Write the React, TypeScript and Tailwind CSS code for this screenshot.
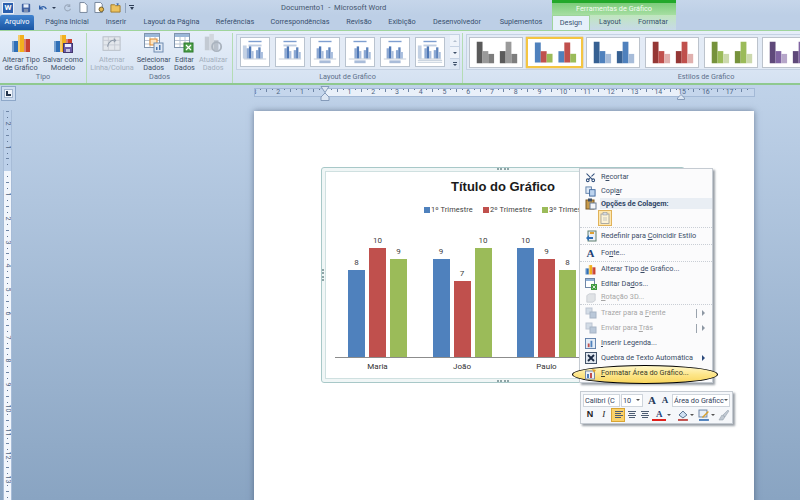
import React from "react";
import { Scissors } from "lucide-react";

const tabs = [
  ["Página Inicial", "w-[60px]"],
  ["Inserir", "w-[38px]"],
  ["Layout da Página", "w-[73px]"],
  ["Referências", "w-[54px]"],
  ["Correspondências", "w-[76px]"],
  ["Revisão", "w-[42px]"],
  ["Exibição", "w-[44px]"],
  ["Desenvolvedor", "w-[66px]"],
  ["Suplementos", "w-[62px]"],
];

function BarsIcon({ className = "w-[20px] h-[20px]", dim = false }: { className?: string; dim?: boolean }) {
  return (
    <svg viewBox="0 0 20 20" className={className}>
      <rect x="1" y="8" width="6" height="11" fill={dim ? "#b9c2cc" : "#2f6fb7"} />
      <rect x="7" y="2" width="6" height="17" fill={dim ? "#c6cdd5" : "#f2b01e"} />
      <rect x="13" y="6" width="6" height="13" fill={dim ? "#aeb7c2" : "#c8402f"} />
      <rect x="1" y="8" width="2" height="11" fill="#ffffff" opacity="0.35" />
      <rect x="7" y="2" width="2" height="17" fill="#ffffff" opacity="0.35" />
      <rect x="13" y="6" width="2" height="13" fill="#ffffff" opacity="0.35" />
    </svg>
  );
}

function SheetIcon({ kind }: { kind: "swap" | "select" | "edit" | "refresh" }) {
  if (kind === "refresh") {
    return (
      <svg viewBox="0 0 22 22" className="w-[20px] h-[20px]">
        <rect x="2" y="4" width="5" height="15" fill="#c3cad3" />
        <rect x="7" y="1" width="5" height="18" fill="#d2d7de" />
        <rect x="12" y="8" width="5" height="11" fill="#b8c0ca" />
        <circle cx="15" cy="15" r="5" fill="none" stroke="#aab3be" strokeWidth="2" />
      </svg>
    );
  }
  if (kind === "swap") {
    return (
      <svg viewBox="0 0 22 20" className="w-[20px] h-[18px]">
        <rect x="1" y="2" width="19" height="15" fill="#e3e7ec" stroke="#b4bbc4" />
        <path d="M1 6h19M1 11h19M7 2v15M14 2v15" stroke="#c5cbd3" />
        <path d="M6 13c1-6 5-8 9-7M13 4l2 2-2 2" fill="none" stroke="#8e9aa8" strokeWidth="1.2" />
      </svg>
    );
  }
  return (
    <svg viewBox="0 0 20 20" className="w-[20px] h-[20px]">
      <rect x="0.5" y="0.5" width="15" height="14" fill="#ffffff" stroke="#8094ad" />
      <rect x="1" y="1" width="14" height="3" fill="#9bb7d9" />
      <path d="M1 7.5h14M1 11h14M6 4v10M11 4v10" stroke="#b8c4d2" />
      {kind === "select" && <rect x="6" y="6" width="7" height="6" fill="#fbe3c0" stroke="#e08a2e" />}
      {kind === "select" ? (
        <>
          <rect x="10" y="10" width="9" height="9" fill="#dfe8f3" stroke="#6f8bb0" />
          <rect x="12" y="14" width="1.5" height="3" fill="#4a76b0" />
          <rect x="15" y="12" width="1.5" height="5" fill="#4a76b0" />
        </>
      ) : (
        <>
          <rect x="10" y="10" width="9" height="9" fill="#4fa04a" stroke="#2c7a2c" />
          <path d="M12 12l5 5M17 12l-5 5" stroke="#ffffff" strokeWidth="1.2" />
        </>
      )}
    </svg>
  );
}

function BigButton({ icon, l1, l2, width, dim = false }: { icon: React.ReactNode; l1: string; l2: string; width: string; dim?: boolean }) {
  return (
    <div className={`flex flex-col items-center ${width}`}>
      <div className="h-[20px] flex items-end justify-center">{icon}</div>
      <div className={`mt-[3px] text-center text-[7.3px] leading-[8px] whitespace-nowrap ${dim ? "text-[#a3afbd]" : "text-[#3f5068]"}`}>
        <div>{l1}</div>
        <div>{l2}</div>
      </div>
    </div>
  );
}

function Group({ width, label, children, last = false }: { width: string; label: string; children: React.ReactNode; last?: boolean }) {
  return (
    <div className={`${width} shrink-0 flex flex-col ${last ? "" : "border-r border-[#b4dcb4]"}`}>
      <div className="h-[40px] flex">{children}</div>
      <div className="h-[11px] text-center text-[7.3px] leading-[10px] text-[#5d708a]">{label}</div>
    </div>
  );
}

function LayoutThumb({ n }: { n: number }) {
  const offset = n % 2 === 0 ? 0 : 3;
  return (
    <div className="w-[30px] h-[30px] shrink-0 bg-white border border-[#b9c3cf]">
      <svg viewBox="0 0 30 30" className="w-full h-full">
        <rect x="8" y="3" width="14" height="1.5" fill="#7f9fd0" />
        {n === 0 || n === 5 ? <rect x="2" y="8" width="4" height="14" fill="#c3d1e4" /> : null}
        {n >= 2 && n < 5 ? <rect x="9" y="24" width="12" height="3" fill="#a9bcd9" /> : <rect x="8" y="7" width="14" height="2" fill="#c0cee2" />}
        <rect x={6 + offset} y="11" width="2.5" height="11" fill="#8da9d3" />
        <rect x={8.5 + offset} y="9" width="2.5" height="13" fill="#4f78b6" />
        <rect x={11 + offset} y="14" width="2.5" height="8" fill="#aabfde" />
        <rect x={16 + offset} y="13" width="2.5" height="9" fill="#8da9d3" />
        <rect x={18.5 + offset} y="10" width="2.5" height="12" fill="#5f85bd" />
        <rect x={21 + offset} y="15" width="2.5" height="7" fill="#aabfde" />
        <path d="M3 22.5h24" stroke="#9aa8ba" strokeWidth="0.6" />
        {n === 5 ? <path d="M2 24h26M2 26h26" stroke="#b0bed0" strokeWidth="0.8" /> : null}
      </svg>
    </div>
  );
}

function StyleThumb({ colors, selected = false, width = "w-[54px]", extra = "" }: { colors: [string, string, string]; selected?: boolean; width?: string; extra?: string }) {
  const [a, b, c] = colors;
  return (
    <div className={`${width} ${extra} h-[31px] shrink-0 bg-white ${selected ? "border-2 border-[#f4c542] shadow-[0_0_1px_#c98a10]" : "border border-[#bcc3cc]"}`}>
      <svg viewBox="0 0 54 31" preserveAspectRatio="none" className="w-full h-full">
        <rect x="7" y="4" width="6" height="23" fill={a} />
        <rect x="13" y="14" width="6" height="13" fill={b} />
        <rect x="19" y="17" width="6" height="10" fill={c} />
        <rect x="31" y="14" width="6" height="13" fill={a} />
        <rect x="37" y="4" width="6" height="23" fill={b} />
        <rect x="43" y="17" width="6" height="10" fill={c} />
      </svg>
    </div>
  );
}

function Ruler({ vertical = false }: { vertical?: boolean }) {
  const cells = vertical ? Array.from({ length: 66 }, (_, i) => i - 10) : Array.from({ length: 84 }, (_, i) => i - 12);
  return (
    <div className={vertical ? "flex flex-col -mt-[1.5px]" : "flex -ml-[3.4px]"}>
      {cells.map((i) => {
        const size = vertical ? "h-[5.95px] w-full" : "w-[5.95px] h-full";
        const mod = ((i % 4) + 4) % 4;
        return (
          <div key={i} className={`${size} shrink-0 flex items-center justify-center text-[7px] leading-none text-[#4f6585]`}>
            {mod === 0 && i !== 0 ? (
              <span className={vertical ? "rotate-90" : ""}>{Math.abs(i / 4)}</span>
            ) : mod === 2 ? (
              <span className={vertical ? "w-[3px] h-[1px] bg-[#6f86a6]" : "w-[1px] h-[3px] bg-[#6f86a6]"} />
            ) : i === 0 ? null : (
              <span className="w-[1px] h-[1px] bg-[#5f7594]" />
            )}
          </div>
        );
      })}
    </div>
  );
}

function Marker({ className }: { className: string }) {
  return (
    <svg viewBox="0 0 10 15" className={`absolute w-[10px] h-[15px] ${className}`}>
      <path d="M1 .5h8L5 6.5zM5 7l4 4v3.5H1V11z" fill="#dce6f3" stroke="#7d93b3" strokeWidth="0.9" />
    </svg>
  );
}

const series = ["bg-[#4f81bd]", "bg-[#c0504d]", "bg-[#9bbb59]"];
const chartData = [
  { name: "Maria", vals: [8, 10, 9] },
  { name: "João", vals: [9, 7, 10] },
  { name: "Paulo", vals: [10, 9, 8] },
];

function Chart() {
  return (
    <div className="relative ml-[68px] mt-[56px] w-[362px] h-[214px] border-[3px] border-[#f0f6f6] outline outline-1 outline-[#a8c8c8] rounded-[2px] shadow-[inset_0_0_0_1px_#cfe0e0]">
      <span className="absolute left-1/2 -top-[3px] -ml-[6px] w-[12px] h-[2px] border-t-2 border-dotted border-[#8ea4a6]" />
      <span className="absolute left-1/2 -bottom-[3px] -ml-[6px] w-[12px] h-[2px] border-t-2 border-dotted border-[#8ea4a6]" />
      <span className="absolute -left-[3px] top-1/2 -mt-[6px] h-[12px] w-[2px] border-l-2 border-dotted border-[#8ea4a6]" />
      <div className="h-[32px] flex items-center justify-center text-[13px] font-bold text-[#1a1a1a] font-['Liberation_Sans',sans-serif]">Título do Gráfico</div>
      <div className="h-[14px] flex items-center pl-[99px] text-[7.4px] tracking-[0.1px] text-[#404040] whitespace-nowrap">
        {["1º Trimestre", "2º Trimestre", "3º Trimestre"].map((t, i) => (
          <div key={t} className="flex items-center w-[59px] shrink-0">
            <span className={`w-[6px] h-[6px] mr-[1px] shrink-0 ${series[i]}`} />
            {t}
          </div>
        ))}
      </div>
      <div className="ml-[10px] mr-[5px] h-[141px] flex items-end gap-[25.5px] pl-[13px] border-b border-[#8c8c8c]">
        {chartData.map((g) => (
          <div key={g.name} className="flex items-end gap-[4px] w-[59px] shrink-0">
            {g.vals.map((v, i) => (
              <div key={i} className="w-[17px] flex flex-col items-center">
                <span className="h-[12px] mb-[1px] text-[8px] leading-[12px] text-[#404040]">{v}</span>
                <div className={`w-full ${series[i]}`} style={{ height: v * 10.9 }} />
              </div>
            ))}
          </div>
        ))}
      </div>
      <div className="mt-[3px] pl-[23px] flex gap-[25.5px] text-[8px] text-[#303030]">
        {chartData.map((g) => (
          <div key={g.name} className="w-[59px] shrink-0 text-center">
            {g.name}
          </div>
        ))}
      </div>
    </div>
  );
}

function MenuIcon({ kind }: { kind: string }) {
  if (kind === "cut") return <Scissors className="w-[11px] h-[11px] text-[#33507c] -rotate-90" strokeWidth={2.2} />;
  if (kind === "copy")
    return (
      <svg viewBox="0 0 12 12" className="w-[11px] h-[11px]">
        <rect x="1" y="1" width="6" height="7" fill="#dfe9f6" stroke="#5f7fa8" />
        <rect x="5" y="4" width="6" height="7" fill="#bcd3ee" stroke="#3f679c" />
      </svg>
    );
  if (kind === "paste")
    return (
      <svg viewBox="0 0 12 12" className="w-[12px] h-[12px]">
        <rect x="1" y="2" width="8" height="9" fill="#c79a4a" stroke="#7c5a24" />
        <rect x="3" y="0.5" width="4" height="3" fill="#3f4f66" />
        <rect x="5" y="5" width="6" height="6" fill="#f5f7fa" stroke="#6c7f96" />
      </svg>
    );
  if (kind === "reset")
    return (
      <svg viewBox="0 0 12 12" className="w-[12px] h-[12px]">
        <rect x="3" y="1" width="8" height="10" fill="#e9eff6" stroke="#5f7f6f" />
        <rect x="5" y="2" width="4" height="2" fill="#e0a030" />
        <path d="M1 8l3-3v2h4v2H4v2z" fill="#2f6fb7" />
      </svg>
    );
  if (kind === "font") return <span className="font-['Liberation_Serif',serif] font-bold text-[11px] leading-none text-[#1f3f75]">A</span>;
  if (kind === "bars") return <BarsIcon className="w-[11px] h-[11px]" />;
  if (kind === "data")
    return (
      <svg viewBox="0 0 12 12" className="w-[12px] h-[12px]">
        <rect x="0.5" y="0.5" width="9" height="9" fill="#fff" stroke="#6f86a6" />
        <rect x="1" y="1" width="8" height="2" fill="#8fb0d8" />
        <rect x="6" y="6" width="6" height="6" fill="#3f9a3f" />
        <path d="M7.5 7.5l3 3m0-3l-3 3" stroke="#fff" strokeWidth="0.8" />
      </svg>
    );
  if (kind === "rot")
    return (
      <svg viewBox="0 0 12 12" className="w-[10px] h-[10px]">
        <path d="M1 3l3-2h7v8l-3 2H1z" fill="#d5d9de" stroke="#b3b9c1" />
      </svg>
    );
  if (kind === "order")
    return (
      <svg viewBox="0 0 12 12" className="w-[12px] h-[12px]">
        <rect x="1" y="1" width="6" height="6" fill="#c3cfdd" stroke="#a4b1c2" />
        <rect x="5" y="5" width="6" height="6" fill="#9fb3cb" stroke="#8497af" />
      </svg>
    );
  if (kind === "legend")
    return (
      <svg viewBox="0 0 12 12" className="w-[11px] h-[11px]">
        <rect x="0.5" y="0.5" width="11" height="11" fill="#e5edf7" stroke="#5c7da8" />
        <rect x="3" y="6" width="2" height="4" fill="#c0504d" />
        <rect x="6" y="3" width="2" height="7" fill="#4f81bd" />
      </svg>
    );
  if (kind === "wrap")
    return (
      <svg viewBox="0 0 12 12" className="w-[12px] h-[12px]">
        <rect x="0.5" y="0.5" width="11" height="11" fill="#dfe6ef" stroke="#44546a" />
        <path d="M3 3l6 6M9 3L3 9" stroke="#1b2a44" strokeWidth="1.8" />
      </svg>
    );
  return (
    <svg viewBox="0 0 12 12" className="w-[12px] h-[12px]">
      <rect x="0.5" y="3" width="9" height="8" fill="#eef2f7" stroke="#7a8ba3" />
      <rect x="2" y="6" width="2" height="4" fill="#4f81bd" />
      <rect x="5" y="5" width="2" height="5" fill="#c0504d" />
      <path d="M7 1l4 1-2 3z" fill="#e2a22c" />
    </svg>
  );
}

function MenuItem({ icon, children, height, dim = false, sep = false, arrow = false, bar = false }: { icon: string; children: React.ReactNode; height: string; dim?: boolean; sep?: boolean; arrow?: boolean; bar?: boolean }) {
  return (
    <div className={`${height} flex items-center ${sep ? "border-b border-dotted border-[#c9ced5]" : ""} ${dim ? "text-[#a6a6a6]" : "text-[#3a4c66]"}`}>
      <div className={`w-[21px] shrink-0 flex justify-center ${dim ? "opacity-70" : ""}`}>
        <MenuIcon kind={icon} />
      </div>
      <div className="flex-1 whitespace-nowrap">{children}</div>
      {bar && <span className="w-[1px] h-[9px] bg-[#9aa3ad] mr-[5px]" />}
      {arrow && <span className={`mr-[7px] w-0 h-0 border-y-[3px] border-y-transparent border-l-[3px] ${dim ? "border-l-[#8d97a3]" : "border-l-[#2c4a7c]"}`} />}
    </div>
  );
}

function ContextMenu() {
  return (
    <div className="absolute left-[325px] top-[57px] w-[134px] bg-[#fbfbfc] border border-[#c5cbd2] shadow-[2px_2px_2px_rgba(70,80,95,0.55)] text-[7.3px] pt-[1px] z-10">
      <MenuItem icon="cut" height="h-[14px]">R<u>e</u>cortar</MenuItem>
      <MenuItem icon="copy" height="h-[14px]">Copi<u>a</u>r</MenuItem>
      <MenuItem icon="paste" height="h-[11px]">
        <div className="h-[11px] bg-[#e9eef4] leading-[11px] font-bold text-[#2f4465] -ml-[1px] pl-[1px]">Opções de Colagem:</div>
      </MenuItem>
      <div className="h-[19px] pl-[18px] pt-[1px] border-b border-dotted border-[#c9ced5]">
        <div className="w-[14px] h-[16px] bg-[#fde7b0] border border-[#e0b25a] flex items-center justify-center">
          <svg viewBox="0 0 10 12" className="w-[10px] h-[12px]">
            <rect x="1" y="2" width="8" height="9.5" fill="#fdf3d6" stroke="#8a8f96" strokeWidth="0.7" />
            <rect x="3" y="0.5" width="4" height="2.5" fill="#d8dce2" stroke="#8a8f96" strokeWidth="0.5" />
            <path d="M3 6h4M3 8h4" stroke="#a3a8ae" strokeWidth="0.6" />
          </svg>
        </div>
      </div>
      <MenuItem icon="reset" height="h-[17px]" sep>Redefinir para <u>C</u>oincidir Estilo</MenuItem>
      <MenuItem icon="font" height="h-[17px]" sep>Fo<u>n</u>te...</MenuItem>
      <MenuItem icon="bars" height="h-[15px]">Alterar Tipo <u>d</u>e Gráfico...</MenuItem>
      <MenuItem icon="data" height="h-[14px]">Editar Da<u>d</u>os...</MenuItem>
      <MenuItem icon="rot" height="h-[14px]" dim sep><u>R</u>otação 3D...</MenuItem>
      <MenuItem icon="order" height="h-[16px]" dim arrow bar>Trazer para a <u>F</u>rente</MenuItem>
      <MenuItem icon="order" height="h-[14px]" dim arrow bar>Enviar para <u>T</u>rás</MenuItem>
      <MenuItem icon="legend" height="h-[16px]"><u>I</u>nserir Legenda...</MenuItem>
      <MenuItem icon="wrap" height="h-[14px]" arrow>Quebra de Texto Automática</MenuItem>
      <div className="relative h-[17px] flex items-center text-[#3a3a2a]">
        <span className="absolute -left-[8px] -right-[6px] top-[0px] h-[19px] rounded-[50%] border border-black bg-gradient-to-b from-[#fff7c8] via-[#fde68a] to-[#f9d65c]" />
        <div className="relative w-[21px] shrink-0 flex justify-center">
          <MenuIcon kind="format" />
        </div>
        <div className="relative whitespace-nowrap"><u>F</u>ormatar Área do Gráfico...</div>
      </div>
    </div>
  );
}

function MiniToolbar() {
  return (
    <div className="absolute left-[326px] top-[280px] w-[153px] h-[33px] bg-[#f5f7fa] border border-[#c5cbd2] shadow-[2px_2px_2px_rgba(70,80,95,0.55)] px-[2px] py-[1px] text-[7.3px] text-[#33435c] z-10">
      <div className="h-[14px] flex items-center gap-[1px] whitespace-nowrap">
        <div className="w-[37px] h-[13px] bg-white border border-[#cfd5dc] leading-[11px] pl-[1px] overflow-hidden">Calibri (C</div>
        <div className="w-[22px] h-[13px] bg-white border border-[#cfd5dc] leading-[11px] pl-[1px] flex items-center justify-between pr-[2px]">
          10
          <span className="w-0 h-0 border-x-[2px] border-x-transparent border-t-[2px] border-t-[#555]" />
        </div>
        <span className="ml-[2px] w-[12px] text-center font-['Liberation_Serif',serif] font-bold text-[11px] leading-none text-[#253a5a]">A</span>
        <span className="w-[12px] text-center font-['Liberation_Serif',serif] font-bold text-[9px] leading-none text-[#253a5a]">A</span>
        <div className="w-[58px] h-[13px] bg-white border border-[#cfd5dc] leading-[11px] pl-[1px] flex items-center justify-between pr-[2px] overflow-hidden">
          Área do Gráficc
          <span className="w-0 h-0 border-x-[2px] border-x-transparent border-t-[2px] border-t-[#555]" />
        </div>
      </div>
      <div className="h-[15px] flex items-center text-[#222]">
        <span className="w-[14px] text-center font-bold text-[9px] font-['Liberation_Sans',sans-serif]">N</span>
        <span className="w-[14px] text-center italic text-[9px] font-['Liberation_Serif',serif]">I</span>
        {[0, 1, 2].map((n) => (
          <span key={n} className={`w-[14px] h-[14px] flex flex-col justify-center gap-[1px] ${n === 0 ? "items-start pl-[3px] bg-[#fbd26a] border border-[#d9a532]" : "items-center"}`}>
            <i className="block w-[8px] h-[1px] bg-[#4d5d73]" />
            <i className="block w-[6px] h-[1px] bg-[#4d5d73]" />
            <i className="block w-[8px] h-[1px] bg-[#4d5d73]" />
            <i className="block w-[6px] h-[1px] bg-[#4d5d73]" />
          </span>
        ))}
        <span className="w-[14px] text-center border-b-2 border-[#e0201c] font-bold text-[9px] leading-[10px] text-[#1f3f75] font-['Liberation_Serif',serif]">A</span>
        <span className="ml-[1px] mr-[3px] w-0 h-0 border-x-[2px] border-x-transparent border-t-[2px] border-t-[#555]" />
        <svg viewBox="0 0 12 12" className="ml-[3px] w-[12px] h-[12px]">
          <path d="M2 6l4-4 4 4-4 3z" fill="#cfe0f2" stroke="#55708f" />
          <rect x="1" y="10" width="10" height="2" fill="#c0504d" />
        </svg>
        <span className="ml-[1px] mr-[4px] w-0 h-0 border-x-[2px] border-x-transparent border-t-[2px] border-t-[#555]" />
        <svg viewBox="0 0 12 12" className="w-[12px] h-[12px]">
          <rect x="1" y="1" width="8" height="7" fill="#e9eff6" stroke="#6f86a6" />
          <path d="M4 8l6-6 1 1-6 6z" fill="#d8a02c" />
          <rect x="1" y="10" width="10" height="2" fill="#4f81bd" />
        </svg>
        <span className="ml-[1px] mr-[3px] w-0 h-0 border-x-[2px] border-x-transparent border-t-[2px] border-t-[#555]" />
        <svg viewBox="0 0 12 12" className="w-[12px] h-[12px]">
          <path d="M1 11l3-5 3 2-2 3zM5 6l5-5 1 1-4 6z" fill="#bfc7d1" stroke="#98a3b0" strokeWidth="0.6" />
        </svg>
      </div>
    </div>
  );
}

export default function App() {
  return (
    <div className="relative w-[800px] h-[500px] overflow-hidden flex flex-col bg-gradient-to-b from-[#cbdcf1] to-[#89a4c2] font-['Roboto',sans-serif]">
      {/* title bar */}
      <div className="h-[15px] shrink-0 flex bg-gradient-to-b from-[#c6d6ea] to-[#bdcfe6]">
        <div className="w-[281px] flex items-center pl-[2px] gap-[4px]">
          <div className="w-[12px] h-[12px] bg-[#2b5fae] border border-[#e8eef7] text-white text-[8px] font-bold leading-[10px] text-center">W</div>
          <svg viewBox="0 0 12 12" className="ml-[3px] w-[10px] h-[10px]">
            <rect x="1" y="1" width="10" height="10" rx="1" fill="#3d5fa0" />
            <rect x="3" y="1.5" width="6" height="4" fill="#e7eef8" />
            <rect x="3.5" y="7" width="5" height="4" fill="#7d8fb0" />
          </svg>
          <svg viewBox="0 0 12 12" className="ml-[3px] w-[10px] h-[10px]">
            <path d="M2 3v4h4M2 7c2-3 6-4 8 0" fill="none" stroke="#2d5fa8" strokeWidth="1.6" />
          </svg>
          <span className="w-0 h-0 border-x-[2px] border-x-transparent border-t-[2px] border-t-[#2e3d55]" />
          <svg viewBox="0 0 12 12" className="ml-[3px] w-[9px] h-[10px]">
            <path d="M9 3a4 4 0 1 0 1 4M9 1v3H6" fill="none" stroke="#9aa8bb" strokeWidth="1.4" />
          </svg>
          <svg viewBox="0 0 10 12" className="ml-[3px] w-[9px] h-[11px]">
            <path d="M1 .5h5l3 3v8H1z" fill="#fff" stroke="#6f7f95" />
          </svg>
          <svg viewBox="0 0 12 12" className="ml-[2px] w-[11px] h-[11px]">
            <path d="M1 .5h6l2 2v9H1z" fill="#fff" stroke="#6f7f95" />
            <circle cx="8" cy="8" r="2.5" fill="#e5b84e" stroke="#6b5a2a" />
          </svg>
          <svg viewBox="0 0 12 12" className="ml-[1px] w-[11px] h-[11px]">
            <path d="M1 3h4l1 1h5v7H1z" fill="#ecc25e" stroke="#a07a28" />
            <path d="M7 1l3 1-2 2z" fill="#3d6fb0" />
          </svg>
          <span className="w-[1px] h-[10px] bg-[#8fa3bd]" />
          <span className="-ml-[1px] w-[5px] border-t border-[#2e3d55] pt-[1px] flex justify-center">
            <span className="w-0 h-0 border-x-[2.5px] border-x-transparent border-t-[3px] border-t-[#2e3d55]" />
          </span>
        </div>
        <div className="w-[271px] text-[7.6px] leading-[15px] text-[#45566f] whitespace-pre">Documento1  -  Microsoft Word</div>
        <div className="w-[124px] border-t-[3px] border-[#22a82a] bg-gradient-to-b from-[#7ccc7a] to-[#a6dea2] text-center text-[7.3px] leading-[12px] text-[#f3fbf2]">Ferramentas de Gráfico</div>
      </div>

      {/* tabs */}
      <div className="h-[15px] shrink-0 flex text-[7.3px] leading-[14px] text-[#38506f] bg-[#bdcfe6]">
        <div className="w-[34px] mr-[3px] bg-gradient-to-b from-[#3f82cf] to-[#1b57a4] rounded-t-[2px] text-center text-white">Arquivo</div>
        {tabs.map(([t, w]) => (
          <div key={t} className={`${w} text-center whitespace-nowrap`}>{t}</div>
        ))}
        <div className="flex w-[124px] bg-gradient-to-b from-[#c0e6bd] to-[#c7d9e8]">
          <div className="w-[38px] bg-[#e6f0fa] border-x border-t border-[#9fd49c] text-center rounded-t-[1px]">Design</div>
          <div className="w-[40px] text-center">Layout</div>
          <div className="w-[46px] text-center">Formatar</div>
        </div>
      </div>

      {/* ribbon */}
      <div className="h-[55px] shrink-0 flex border-t border-[#9fd49c] border-b-2 border-b-[#8fc98f] bg-gradient-to-b from-[#e6eef9] to-[#d4e1f1] pt-[2px] overflow-hidden">
        <Group width="w-[87px]" label="Tipo">
          <BigButton width="w-[42px]" l1="Alterar Tipo" l2="de Gráfico" icon={<BarsIcon />} />
          <BigButton
            width="w-[42px]"
            l1="Salvar como"
            l2="Modelo"
            icon={
              <span className="relative w-[20px] h-[20px]">
                <BarsIcon />
                <svg viewBox="0 0 10 10" className="absolute right-0 bottom-0 w-[10px] h-[10px]">
                  <rect x="0.5" y="0.5" width="9" height="9" fill="#6b5ba8" stroke="#43376f" />
                  <rect x="2" y="1" width="6" height="3" fill="#eef" />
                  <rect x="3" y="6" width="4" height="3" fill="#c8c3e0" />
                </svg>
              </span>
            }
          />
        </Group>
        <Group width="w-[146px]" label="Dados">
          <div className="w-[4px]" />
          <BigButton width="w-[42px]" dim l1="Alternar" l2="Linha/Coluna" icon={<SheetIcon kind="swap" />} />
          <BigButton width="w-[42px]" l1="Selecionar" l2="Dados" icon={<SheetIcon kind="select" />} />
          <BigButton width="w-[20px]" l1="Editar" l2="Dados" icon={<SheetIcon kind="edit" />} />
          <BigButton width="w-[38px]" dim l1="Atualizar" l2="Dados" icon={<SheetIcon kind="refresh" />} />
        </Group>
        <Group width="w-[230px]" label="Layout de Gráfico">
          <div className="ml-[3px] mt-[1px] h-[36px] w-[224px] bg-[#e3ebf6] border border-[#c5d2e3] flex items-center">
            <div className="flex gap-[5px] pl-[3px] w-[212px]">
              {[0, 1, 2, 3, 4, 5].map((n) => (
                <LayoutThumb key={n} n={n} />
              ))}
            </div>
            <div className="w-[9px] h-full flex flex-col text-[#4d5f78] ml-[1px]">
              <div className="h-[12px] bg-[#eef3fa] border-b border-[#c5d2e3] flex items-center justify-center">
                <span className="w-0 h-0 border-x-[2px] border-x-transparent border-b-[2px] border-b-[#b4bfce]" />
              </div>
              <div className="h-[12px] bg-[#eef3fa] border-b border-[#c5d2e3] flex items-center justify-center">
                <span className="w-0 h-0 border-x-[2px] border-x-transparent border-t-[2px] border-t-[#3d4f68]" />
              </div>
              <div className="flex-1 bg-[#dde7f4] flex flex-col items-center justify-center gap-[1px]">
                <span className="w-[4px] h-[1px] bg-[#3d4f68]" />
                <span className="w-0 h-0 border-x-[2px] border-x-transparent border-t-[2px] border-t-[#3d4f68]" />
              </div>
            </div>
          </div>
        </Group>
        <Group width="w-[486px]" label="Estilos de Gráfico" last>
          <div className="ml-[3px] mt-[1px] h-[36px] w-[478px] bg-[#e3ebf6] border border-[#c5d2e3] flex items-center gap-[3px] pl-[2px]">
            <StyleThumb colors={["#5a5a5a", "#9a9a9a", "#7d7d7d"]} />
            <StyleThumb selected width="w-[57px]" colors={["#4f81bd", "#c0504d", "#9bbb59"]} />
            <StyleThumb colors={["#366092", "#4f81bd", "#a7bcd9"]} />
            <StyleThumb extra="ml-[2px]" colors={["#953735", "#c0504d", "#e0b0ae"]} />
            <StyleThumb extra="ml-[2px]" colors={["#76923c", "#9bbb59", "#ccd9ad"]} />
            <StyleThumb extra="ml-[1px]" colors={["#5f497a", "#8064a2", "#b6a6c9"]} />
          </div>
        </Group>
      </div>

      {/* workspace */}
      <div className="relative flex flex-1 min-h-0">
        <div className="w-[254px] shrink-0 pt-[1px] pl-[1px]">
          <div className="w-[15px] h-[15px] border border-[#8ea8c9] bg-[#cddcf0] flex items-center justify-center">
            <div className="w-[9px] h-[9px] bg-[#f1f5fb] border border-[#a3b6cf] flex items-end justify-center pb-[1px]">
              <div className="w-[5px] h-[5px] border-l-2 border-b-2 border-[#25364f]" />
            </div>
          </div>
          <div className="mt-[9px] ml-[2px] w-[9px] h-[390px] border-x border-[#a7bcd7] overflow-hidden bg-[linear-gradient(180deg,#bcd0e9_61px,#f2f6fc_61px)]">
            <Ruler vertical />
          </div>
        </div>
        <div className="relative flex-1">
          <div className="relative mt-[3px] w-[501px] h-[9px] border border-[#a3b9d6] overflow-hidden bg-[linear-gradient(90deg,#c5d6ec_71px,#e9f0f9_71px,#e9f0f9_426px,#c5d6ec_426px)]">
            <Ruler />
          </div>
          <Marker className="left-[66px] top-[1px]" />
          <svg viewBox="0 0 8 6" className="absolute left-[423px] top-[9px] w-[8px] h-[6px]">
            <path d="M4 .5L7.5 4v1.5H.5V4z" fill="#dce6f3" stroke="#7d93b3" strokeWidth="0.9" />
          </svg>
          <div className="relative mt-[14px] w-[500px] h-[400px] bg-white shadow-[0_0_6px_rgba(60,75,100,0.6)] overflow-visible">
            <div className="pt-px" />
            <Chart />
            <ContextMenu />
            <MiniToolbar />
          </div>
        </div>
      </div>
    </div>
  );
}
